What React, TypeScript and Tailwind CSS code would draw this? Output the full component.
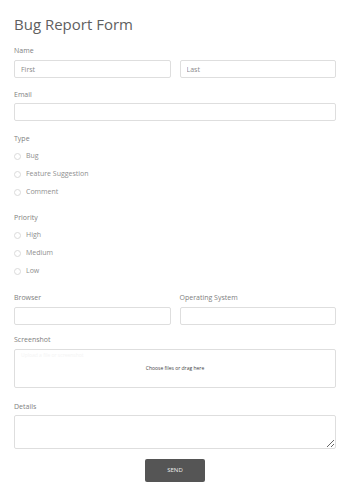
import React from "react";

const font = { fontFamily: '"Open Sans", "Liberation Sans", sans-serif' };

function Label({ children, className = "" }: { children: React.ReactNode; className?: string }) {
  return <div className={`h-[10px] text-[7px] leading-[10px] text-[#808080] ${className}`}>{children}</div>;
}

function TextBox({ placeholder }: { placeholder?: string }) {
  return (
    <input
      placeholder={placeholder}
      className="block h-[18px] w-full rounded-[2px] border border-[#dedede] bg-white px-[6px] text-[7px] text-[#555] outline-none placeholder:text-[#8a8a8a]"
    />
  );
}

function Radio({ label }: { label: string }) {
  return (
    <label className="flex h-[10px] items-center gap-[5px] text-[7px] leading-[10px] text-[#8f8f8f]">
      <span className="block h-[7px] w-[7px] rounded-full border border-[#dadada] bg-white" />
      {label}
    </label>
  );
}

export default function App() {
  return (
    <div className="min-h-[496px] w-[350px] bg-white px-[14px] pt-[14px]" style={font}>
      <h1 className="h-[20px] text-[15px] leading-[20px] font-normal text-[#5f5f5f]">Bug Report Form</h1>

      <Label className="mt-[12px]">Name</Label>
      <div className="mt-[4px] flex gap-[9px]">
        <div className="flex-1">
          <TextBox placeholder="First" />
        </div>
        <div className="flex-1">
          <TextBox placeholder="Last" />
        </div>
      </div>

      <Label className="mt-[12px]">Email</Label>
      <div className="mt-[3px]">
        <TextBox />
      </div>

      <Label className="mt-[13px]">Type</Label>
      <div className="mt-[7px] flex flex-col gap-[8px]">
        <Radio label="Bug" />
        <Radio label="Feature Suggestion" />
        <Radio label="Comment" />
      </div>

      <Label className="mt-[16px]">Priority</Label>
      <div className="mt-[7px] flex flex-col gap-[8px]">
        <Radio label="High" />
        <Radio label="Medium" />
        <Radio label="Low" />
      </div>

      <div className="mt-[17px] flex gap-[9px]">
        <div className="flex-1">
          <Label>Browser</Label>
          <div className="mt-[4px]">
            <TextBox />
          </div>
        </div>
        <div className="flex-1">
          <Label>Operating System</Label>
          <div className="mt-[4px]">
            <TextBox />
          </div>
        </div>
      </div>

      <Label className="mt-[10px]">Screenshot</Label>
      <div className="relative mt-[4px] flex h-[39px] items-center justify-center rounded-[2px] border border-[#dedede] bg-white">
        <span className="absolute left-[6px] top-[2px] text-[5px] text-[#f4f4f4]">Upload a file or screenshot</span>
        <span className="text-[5px] text-[#444]">Choose files or drag here</span>
      </div>

      <Label className="mt-[14px]">Details</Label>
      <textarea className="mt-[3px] block h-[34px] w-full resize-y rounded-[2px] border border-[#dedede] bg-white text-[7px] outline-none" />

      <div className="mt-[10px] flex justify-center">
        <button className="h-[23px] w-[60px] rounded-[2px] bg-[#555] text-[6px] text-[#eee]">SEND</button>
      </div>
    </div>
  );
}
